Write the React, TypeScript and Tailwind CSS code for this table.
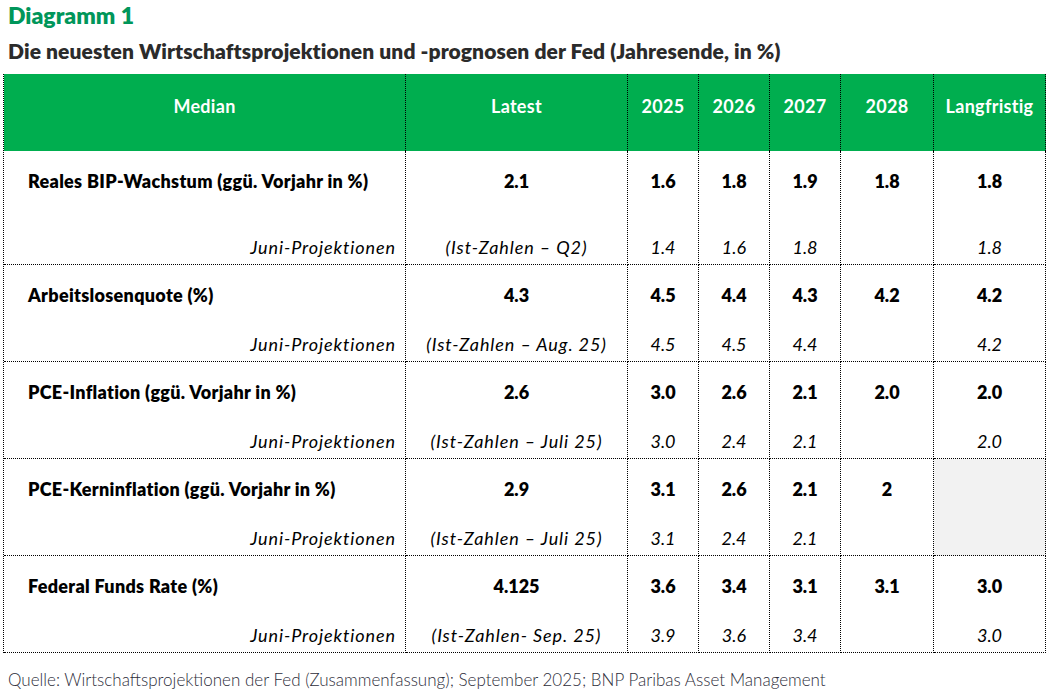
type Row = {
  label: string;
  latest: string;
  sub: string;
  values: string[];
  proj: string[];
  grayLast?: boolean;
  tall?: boolean;
};

const rows: Row[] = [
  {
    label: "Reales BIP-Wachstum (ggü. Vorjahr in %)",
    latest: "2.1",
    sub: "(Ist-Zahlen – Q2)",
    values: ["1.6", "1.8", "1.9", "1.8", "1.8"],
    proj: ["1.4", "1.6", "1.8", "", "1.8"],
    tall: true,
  },
  {
    label: "Arbeitslosenquote (%)",
    latest: "4.3",
    sub: "(Ist-Zahlen – Aug. 25)",
    values: ["4.5", "4.4", "4.3", "4.2", "4.2"],
    proj: ["4.5", "4.5", "4.4", "", "4.2"],
  },
  {
    label: "PCE-Inflation (ggü. Vorjahr in %)",
    latest: "2.6",
    sub: "(Ist-Zahlen – Juli 25)",
    values: ["3.0", "2.6", "2.1", "2.0", "2.0"],
    proj: ["3.0", "2.4", "2.1", "", "2.0"],
  },
  {
    label: "PCE-Kerninflation (ggü. Vorjahr in %)",
    latest: "2.9",
    sub: "(Ist-Zahlen – Juli 25)",
    values: ["3.1", "2.6", "2.1", "2", ""],
    proj: ["3.1", "2.4", "2.1", "", ""],
    grayLast: true,
  },
  {
    label: "Federal Funds Rate (%)",
    latest: "4.125",
    sub: "(Ist-Zahlen- Sep. 25)",
    values: ["3.6", "3.4", "3.1", "3.1", "3.0"],
    proj: ["3.9", "3.6", "3.4", "", "3.0"],
  },
];

const heads = ["Median", "Latest", "2025", "2026", "2027", "2028", "Langfristig"];

const cell =
  "flex flex-col justify-between border-r border-b border-dotted border-black pt-[19px] pb-[6px] leading-[22px]";

export default function App() {
  return (
    <div
      className="w-[1048px] h-[694px] bg-white text-black"
      style={{ fontFamily: "Lato, 'Open Sans', sans-serif" }}
    >
      <div className="pl-[8px] pt-[2px] text-[23px] font-extrabold leading-[26px] text-[#00965a]">
        Diagramm 1
      </div>
      <div className="pl-[8px] pt-[11px] text-[21px] font-extrabold leading-[24px] tracking-[0.1px] text-[#2b2b2b]">
        Die neuesten Wirtschaftsprojektionen und -prognosen der Fed (Jahresende, in %)
      </div>

      <div className="ml-[3px] mt-[11px] grid w-[1042px] grid-cols-[402px_222px_71px_71px_71px_93px_112px] border-l border-dotted border-black text-[18px]">
        {heads.map((h) => (
          <div
            key={h}
            className="h-[77px] border-r border-dotted border-black bg-[#00ae4f] pt-[21px] text-center font-bold leading-[22px] tracking-[0.3px] text-white"
          >
            {h}
          </div>
        ))}

        {rows.map((r) => (
          <div key={r.label} className="contents">
            <div className={`${cell} ${r.tall ? "h-[114px]" : "h-[97px]"} pr-[9px] pl-[24px]`}>
              <div className="font-extrabold tracking-[0.3px]">{r.label}</div>
              <div className="text-right italic tracking-[0.9px]">Juni-Projektionen</div>
            </div>
            <div className={`${cell} text-center`}>
              <div className="font-extrabold">{r.latest}</div>
              <div className="italic tracking-[0.9px]">{r.sub}</div>
            </div>
            {r.values.map((v, i) => (
              <div
                key={i}
                className={`${cell} text-center ${r.grayLast && i === 4 ? "bg-[#f2f2f2]" : ""}`}
              >
                <div className="font-extrabold">{v || "\u00a0"}</div>
                <div className="italic">{r.proj[i] || "\u00a0"}</div>
              </div>
            ))}
          </div>
        ))}
      </div>

      <div className="pl-[8px] pt-[17px] text-[17px] font-light leading-[20px] text-[#2d2d3a]">
        Quelle: Wirtschaftsprojektionen der Fed (Zusammenfassung); September 2025; BNP Paribas Asset Management
      </div>
    </div>
  );
}
